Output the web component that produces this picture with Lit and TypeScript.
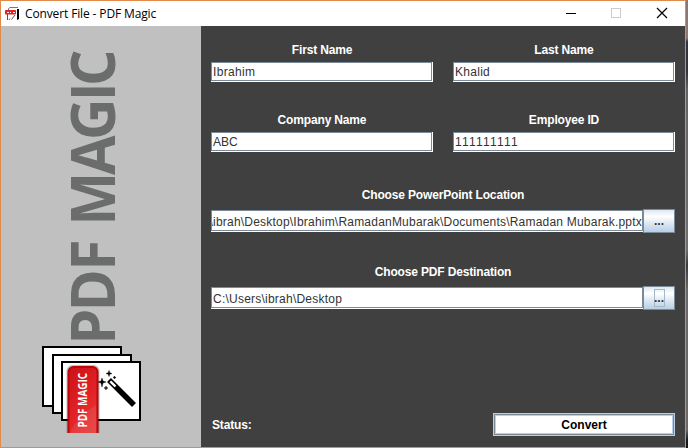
import { LitElement, html, css, svg } from "lit";
import { customElement, property } from "lit/decorators.js";

@customElement("form-field")
class FormField extends LitElement {
  @property() label = "";
  @property() value = "";
  @property({ type: Boolean }) browse = false;
  @property({ type: Boolean }) focused = false;
  @property() spacing = "0.2";

  static styles = css`
    :host { display: block; }
    .label {
      height: 16px; line-height: 16px; text-align: center; color: #fff;
      font-weight: bold; letter-spacing: -0.16px; margin-bottom: 4px; white-space: nowrap;
    }
    .row { display: flex; align-items: center; }
    .input {
      box-sizing: border-box; flex: 1; min-width: 0; height: 19px; line-height: 19px;
      background: #fff; border: 1px solid #7a8a99; margin: 0 1px 1px 0; padding-left: 1px;
      box-shadow: 1px 0 #fff, 0 1px #fff, 1px 1px #fff;
      color: #333; overflow: hidden; white-space: nowrap; display: flex; font-kerning: none;
    }
    .browse .label { margin-bottom: 6px; }
    .browse .input { height: 21px; line-height: 22px; margin-right: 0; padding-right: 1px; box-shadow: 0 1px #fff; }
    .browse .tail { justify-content: flex-end; padding-right: 0; }
    button {
      box-sizing: border-box; width: 32px; height: 24px; padding: 0; border: 1px solid #7a8a99;
      font: bold 12px "Liberation Sans", sans-serif; color: #333; flex: none;
      background: linear-gradient(#dde8f3, #fff 30%, #dce7f1 62%, #b8cfe5);
      display: flex; align-items: center; justify-content: center;
    }
    .dots { width: 11px; height: 18px; line-height: 20px; box-sizing: border-box; display: flex; justify-content: center; align-items: center; }
    .focus { border: 1px solid #a3b8cc; }
  `;

  render() {
    return html`<div class=${this.browse ? "browse" : ""}>
      <div class="label">${this.label}</div>
      <div class="row">
        <div class="input ${this.value.startsWith("\\") ? "tail" : ""}"><span style="letter-spacing:${this.spacing}px">${this.value}</span></div>
        ${this.browse ? html`<button><span class="dots ${this.focused ? "focus" : ""}">...</span></button>` : ""}
      </div>
    </div>`;
  }
}

const letters = "P,D,F,M,A,G,I,C".split(",");
const offsets = [-5.2, 27.9, 68.7, 113.7, 164.5, 199.6, 238.2, 253.6];

@customElement("app-root")
class AppRoot extends LitElement {
  static styles = css`
    :host {
      display: grid; grid-template-columns: 686px 2px; width: 688px; height: 448px; overflow: hidden;
      font: 12px "Liberation Sans", Arial, sans-serif;
    }
    .desktop { background: linear-gradient(#8d7772 0 38px, #34323a 42px 72px, #666167 90px, #716c6e 250px, #3b383e 265px, #6b6768 290px 430px, #16161c 440px); }
    .window {
      box-sizing: border-box; height: 448px; border: 1px solid #e08a4c;
      display: grid; grid-template: 25px 421px / 200px 484px; background: #404040;
    }
    header { grid-column: 1 / 3; background: #fff; display: flex; align-items: center; padding-left: 4px; }
    .title { font: 12px/24px "Open Sans", "Noto Sans", sans-serif; color: #000; margin-left: 4px; flex: 1; letter-spacing: -0.13px; }
    .app { width: 16px; height: 16px; }
    .controls { width: 138px; height: 25px; }
    aside { background: #c0c0c0; }
    aside svg { display: block; }
    .form { padding: 16px 10px 11px; display: flex; flex-direction: column; }
    .pair { display: grid; grid-template-columns: 222px 222px; gap: 20px; height: 70px; }
    .wide { height: 77px; }
    .wide.first { margin-top: 5px; }
    .bottom { margin-top: auto; display: flex; justify-content: space-between; align-items: center; color: #fff; font-weight: bold; }
    .status { padding-left: 1px; letter-spacing: -0.14px; }
    .convert {
      box-sizing: border-box; width: 182px; height: 23px; padding: 0; background: #fff; color: #000;
      border: 1px solid #b8cfe5; box-shadow: inset 0 0 0 1px #7a8a99, inset 0 0 0 2px #b8cfe5;
      font: bold 12px "Liberation Sans", sans-serif;
    }
  `;

  private appIcon() {
    return html`<svg class="app" viewBox="0 0 16 16">
      <path d="M3.500 4V2.500L5 1.500h8" fill="none" stroke="#777" />
      <path d="M12 3h2v10l-2 1z" fill="#000" />
      <path d="M2.500 8v6M4 14l1-1.500M10 9l-3.500 4.500" stroke="#555" fill="none" />
      <rect y="4" width="11" height="4.500" rx="1" fill="#e2231f" />
      <path d="M2 6.500h2M5 6.500h1M8 6.500h2" stroke="#fff" />
    </svg>`;
  }

  private logo() {
    return html`<svg width="200" height="421" viewBox="1 26 200 421">
      <defs>
        <linearGradient id="red" x1="0" y1="0" x2="0.5" y2="1">
          <stop offset="0" stop-color="#c81216" /><stop offset="0.6" stop-color="#e32226" /><stop offset="1" stop-color="#e53a3a" />
        </linearGradient>
        <clipPath id="cut"><rect x="60" y="360" width="45" height="73" /></clipPath>
      </defs>
      <g transform="translate(115 339.500) rotate(-90) scale(.93 1)" fill="#6b6d6c" font-family="Open Sans, Noto Sans, sans-serif" font-weight="700" font-size="61.6">
        ${letters.map((c, i) => svg`<text x=${offsets[i] / 0.93}>${c}</text>`)}
      </g>
      <g fill="#fff" stroke="#000" stroke-width="2">
        <path d="M43 347h78v59H43z" /><path d="M53 355h78v58H53z" /><path d="M62 362h78v58H62z" />
      </g>
      <g clip-path="url(#cut)">
        <rect x="66.5" y="365" width="33" height="76" rx="6" fill="#000" opacity=".25" />
        <rect x="68.500" y="367" width="29" height="76" rx="5" fill="url(#red)" stroke="#b9080c" stroke-width="2" />
        <path d="M96 405Q77 416 70 433H96Z" fill="#fff" opacity=".08" />
      </g>
      <text transform="translate(86.500 427.500) rotate(-90)" fill="#fff" font-family="Open Sans, Noto Sans, sans-serif" font-weight="700" font-size="11.500" textLength="54.500" lengthAdjust="spacingAndGlyphs">PDF MAGIC</text>
      <path d="M109 380L134 405" stroke="#000" stroke-width="5.500" />
      <path d="M110.300 381.300L115.500 386.500" stroke="#fff" stroke-width="2.400" />
      <path d="M102 378l1 3 3 1-3 1-1 4-1-4-3-1 3-1zM109 370.500l.8 2.200 2.200.8-2.200.8-.8 2.200-.8-2.200-2.200-.8 2.200-.8zM106 386l.6 1.400 1.400.6-1.400.6-.6 1.400-.6-1.400-1.400-.6 1.400-.6zM114.500 376l.5 1 1 .5-1 .5-.5 1-.5-1-1-.5 1-.5z" fill="#000" stroke="#000" stroke-width=".4" />
    </svg>`;
  }

  render() {
    return html`<div class="window">
      <header>
        ${this.appIcon()}
        <div class="title">Convert File - PDF Magic</div>
        <svg class="controls" viewBox="547 1 138 25">
          <path d="M566 13.500h10" stroke="#000" />
          <rect x="611.500" y="8.500" width="9" height="9" fill="none" stroke="#ccc" />
          <path d="M657 8l10 10M667 8l-10 10" stroke="#000" stroke-width="1.200" />
        </svg>
      </header>
      <aside>${this.logo()}</aside>
      <div class="form">
        <div class="pair">
          <form-field label="First Name" value="Ibrahim" spacing="0.35"></form-field>
          <form-field label="Last Name" value="Khalid" spacing="0.28"></form-field>
        </div>
        <div class="pair">
          <form-field label="Company Name" value="ABC" spacing="0"></form-field>
          <form-field label="Employee ID" value="111111111" spacing="0.33"></form-field>
        </div>
        <form-field class="wide first" browse label="Choose PowerPoint Location" spacing="0.21"
          value="\\ibrah\\Desktop\\Ibrahim\\RamadanMubarak\\Documents\\Ramadan Mubarak.pptx"></form-field>
        <form-field class="wide" browse focused label="Choose PDF Destination" spacing="0.23" value="C:\\Users\\ibrah\\Desktop"></form-field>
        <div class="bottom"><span class="status">Status:</span><button class="convert">Convert</button></div>
      </div>
    </div><div class="desktop"></div>`;
  }
}
